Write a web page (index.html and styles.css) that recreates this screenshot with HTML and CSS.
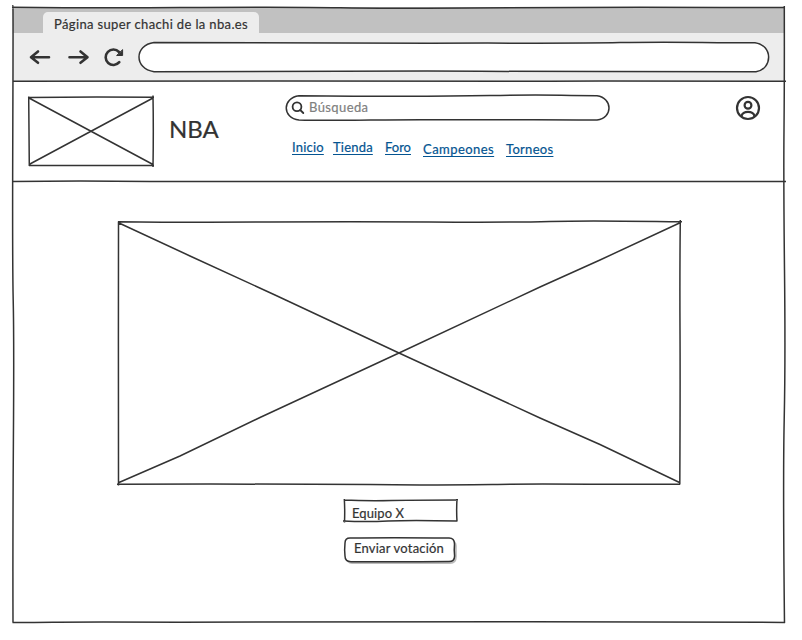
FILE: index.html
```html
<!DOCTYPE html>
<html lang="es">
<head>
<meta charset="utf-8">
<title>Página super chachi de la nba.es</title>
<link rel="stylesheet" href="styles.css">
</head>
<body>
<div class="window">
  <div class="tabs"><div class="tab"><span class="t-tab">Página super chachi de la nba.es</span></div></div>
  <div class="toolbar">
    <svg class="nav-icons" width="96" height="22" viewBox="29 46 96 22">
      <path d="M49 57.2H31.5M38 51.500L31 57.2L38 62.800"/>
      <path d="M69.500 57.200H87M80.500 51.500L87.500 57.200L80.500 62.800"/>
      <path d="M119.300 62.200A7.700 7.700 0 1 1 119 52"/>
      <path class="solid" d="M122.600 50V55.500H117Z"/>
    </svg>
    <div class="address">
      <svg class="sketch" width="632" height="32" viewBox="138 41 632 32">
        <path d="M154 42.500C240 42 330 43.500 430 43.200S570 43.600 620 42.600S700 42.700 755 42.700C773 45 773 69 756 71.700C650 71.300 580 72 480 71.300S290 72 154 71.700C134 69 134 45 154 42.500Z"/>
      </svg>
    </div>
  </div>
  <header class="header">
    <svg class="logo" width="128" height="72" viewBox="27 95 128 72">
      <path d="M28.500 97.500Q90 96.400 154 97.300M153 95.500Q153.600 130 153 167M154 165.500H29M29.300 166Q28.800 120 28.700 96.500M29 98L153 164.500M29 164.500L153 98"/>
    </svg>
    <div class="brand"><span>NBA</span></div>
    <div class="middle">
      <div class="search">
        <svg class="sketch" width="325" height="27" viewBox="285 94 325 27">
          <path d="M299 95.700C370 96.500 430 96.800 490 95.600S550 95.500 597 95.700C613 98 613 118 597 120C550 119.200 480 120 430 119.700S340 121.200 299 120C282 118 282 98 299 95.700Z"/>
        </svg>
        <svg class="lens" width="14" height="14" viewBox="0 0 14 14"><circle cx="6" cy="5.700" r="4.400"/><path d="M9.200 9L12.300 12"/></svg>
        <span class="t-search">Búsqueda</span>
      </div>
      <nav class="links">
        <a class="l1">Inicio</a><a class="l2">Tienda</a><a class="l3">Foro</a><a class="l4 low">Campeones</a><a class="l5 low">Torneos</a>
      </nav>
    </div>
    <svg class="user" width="26" height="26" viewBox="0 0 26 26">
      <circle cx="13" cy="13" r="11"/><circle cx="13" cy="10.200" r="3.400"/>
      <path d="M6.500 21.500C7 15.300 19 15.300 19.500 21.500"/>
    </svg>
  </header>
  <main class="content">
    <svg class="picture" width="566" height="268" viewBox="116 219 566 268">
      <path d="M118 221.700Q190 222.600 270 222T430 222T550 221.400T682 221.800M680.300 220Q679.700 270 680 330T679.800 484.500M680 484.200C620 484.800 560 483.600 510 484.200S430 485.400 370 484.600S200 483.800 117 484.200M118.500 485.500Q118.200 400 118.400 340T118.500 221.500M119 223L190 256L275 295L399 353L540 418L600 444.500L679.500 482.500M119 482.500L180 456L260 417.500L399 353L540 287L600 260L679.500 223"/>
    </svg>
    <div class="field">
      <svg class="sketch" width="118" height="25" viewBox="342 498 118 25">
        <path d="M344 500Q365 501 392 500.500T458 500M457 499Q456.300 510 457 521.500M457 521Q410 519.800 388 521T343 521M344.500 522.500Q345 510 344.300 499"/>
      </svg>
      <span class="t-field">Equipo X</span>
    </div>
    <div class="vote">
      <svg class="sketch" width="116" height="30" viewBox="342 535 116 30">
        <path class="shadow" d="M352 540H450Q456.800 540 456.800 546V557Q456.800 564 450 564H352Q346 564 346 557V546Q346 540 352 540Z"/>
        <path class="face" d="M350 538Q390 537.300 449 538Q454.500 538 454.500 544Q453.900 550 454.600 556Q454.500 561.600 449 561.600Q400 562 351 561.700Q345 561.600 345 556Q344.300 550 345 543Q345 538 350 538Z"/>
      </svg>
      <span class="t-vote">Enviar votación</span>
    </div>
  </main>
  <svg class="frame" width="778" height="620" viewBox="10 5 778 620">
    <path d="M12 7.200C80 8 120 8 180 7.600S300 7 340 7.800S400 8.200 470 8S600 7 640 7.200S740 7.400 785 7.400M784.300 6Q784.500 80 784 130T784.500 270T784.200 420T784.500 623M785 622.400C650 622.600 580 621.400 530 621.700S330 622.600 180 622.200S80 622.300 12.500 622.500M13 622.500Q12.700 540 13.400 440T13.200 300T12.800 130T12.800 6M12.500 81.200C80 81.400 180 80.600 280 81S480 81.500 550 81.300S640 80.800 786 81.200M12.500 181.400Q80 180.500 150 181.400H786"/>
  </svg>
</div>
</body>
</html>
```
FILE: styles.css
```css
* { box-sizing: border-box; }
body { min-height: 640px; margin: 0; padding: 7px 0 0 13px; background: #fff; color: #333; font: 13px/16px Lato, "Noto Sans", sans-serif; -webkit-text-stroke: 0.2px currentColor; }
svg { display: block; fill: none; stroke: #333; stroke-width: 1.5; }
.window { position: relative; width: 771px; height: 615px; display: flex; flex-direction: column; }
.frame { position: absolute; left: -3px; top: -2px; pointer-events: none; }
.tabs { height: 26px; padding: 5px 0 0 30px; background: #c1c1c1; }
.tab { width: 216px; height: 21px; padding: 4px 0 0 11px; border-radius: 5px 5px 0 0; background: #ededed; white-space: nowrap; letter-spacing: 0.36px; }
.toolbar { height: 48px; display: flex; gap: 13px; padding: 8px 0 0 16px; background: #ededed; }
.nav-icons { margin-top: 5px; stroke-width: 2.6; stroke-linecap: round; stroke-linejoin: round; }
.solid { fill: #333; stroke-width: 1; }
.address, .search, .field, .vote { position: relative; }
.address { width: 632px; height: 32px; }
.sketch { position: absolute; left: 0; top: 0; z-index: 0; }
.address .sketch, .search .sketch { fill: #fff; }
.header { height: 100px; display: flex; align-items: flex-start; }
.logo { margin: 14px 0 0 14px; }
.brand { width: 130px; padding: 33px 0 0 14px; font-size: 24px; line-height: 30px; }
.middle { width: 325px; padding-top: 13px; }
.search { height: 27px; display: flex; padding: 5px 0 0 6px; color: #808080; letter-spacing: 0.4px; }
.search span, .field span, .vote span { position: relative; }
.search span { margin-left: 4px; }
.lens { position: relative; margin-top: 2px; stroke-width: 1.8; stroke-linecap: round; }
.links { display: flex; align-items: flex-start; margin: 18px 0 0 7px; color: #045491; white-space: nowrap; }
.links a { text-decoration: underline; text-underline-offset: 2px; }
.low { margin-top: 2px; }
.l1 { width: 41px; letter-spacing: 0.2px; }
.l2 { width: 52px; letter-spacing: 0.2px; }
.l3 { width: 38px; }
.l4 { width: 83px; letter-spacing: 0.45px; }
.l5 { letter-spacing: 0.3px; }
.user { margin: 14px 0 0 125px; stroke-width: 2.2; }
.content { flex: 1; display: flex; flex-direction: column; align-items: flex-start; }
.picture { margin: 38px 0 0 103px; }
.field { width: 118px; height: 25px; margin: 11px 0 0 329px; padding: 7px 0 0 10px; letter-spacing: 0.1px; }
.vote { width: 116px; height: 30px; margin: 12px 0 0 329px; padding: 5px 0 0 12px; white-space: nowrap; letter-spacing: 0.2px; }
.shadow { fill: #bbb; stroke: none; }
.face { fill: #fff; }
```
